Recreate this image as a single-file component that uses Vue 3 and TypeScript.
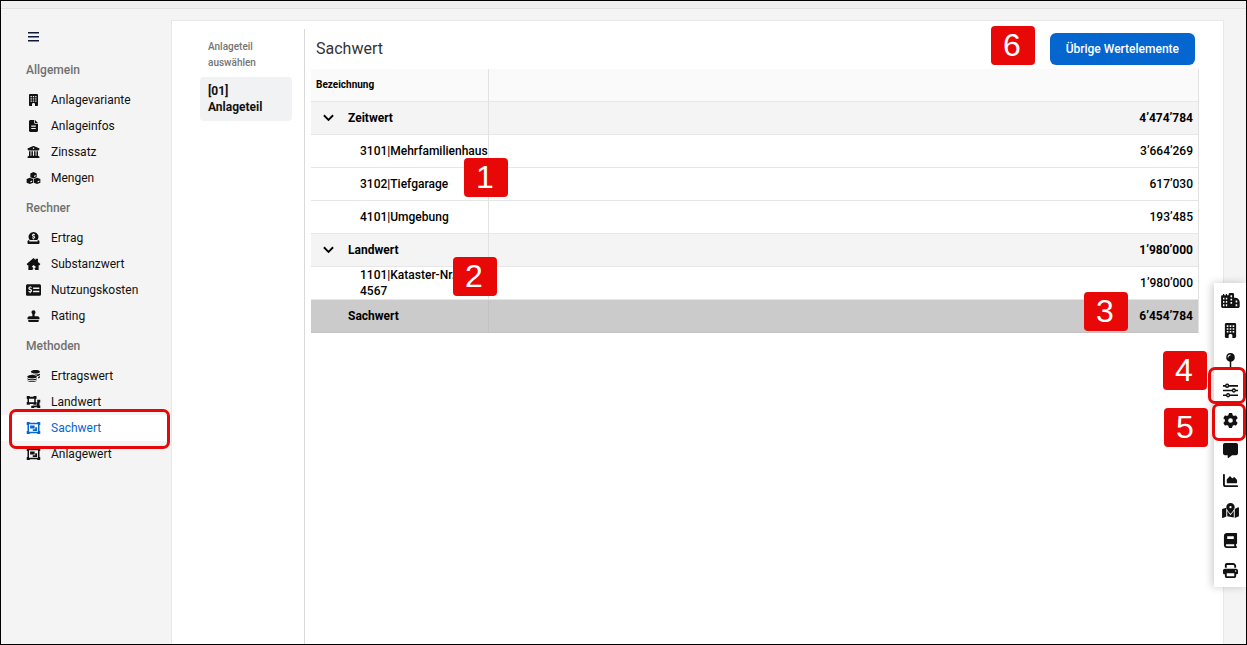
<script setup lang="ts">
interface Icon {
  box: string
  d: string
}

interface NavItem {
  label: string
  icon: string
  active?: boolean
}

interface NavGroup {
  title: string
  items: NavItem[]
}

interface Row {
  kind: 'group' | 'item' | 'total'
  label: string
  value: string
}

const icons: Record<string, Icon> = {
  building: {
    box: '0 0 384 512',
    d: 'M48 0C21 0 0 21 0 48V464c0 27 21 48 48 48h80V432c0-70 128-70 128 0v80h80c27 0 48-21 48-48V48c0-27-21-48-48-48zM64 80h56v56H64zM164 80h56v56h-56zM264 80h56v56h-56zM64 176h56v56H64zM164 176h56v56h-56zM264 176h56v56h-56zM64 272h56v56H64zM164 272h56v56h-56zM264 272h56v56h-56z',
  },
  file: {
    box: '0 0 384 512',
    d: 'M64 0C28.700 0 0 28.700 0 64V448c0 35.300 28.700 64 64 64H320c35.300 0 64-28.700 64-64V160H256c-17.700 0-32-14.300-32-32V0zM256 0V128H384zM96 236H288v48H96zM96 340H288v48H96z',
  },
  landmark: {
    box: '0 0 512 512',
    d: 'M243.400 2.600l-224 96c-14 6-21.800 21-18.700 35.800S16.800 160 32 160v8c0 13.300 10.700 24 24 24H456c13.300 0 24-10.700 24-24v-8c15.200 0 28.300-10.700 31.300-25.600s-4.800-29.900-18.700-35.800l-224-96c-8-3.400-17.200-3.400-25.200 0zM128 224H64V420l-50 33c-12 8-17 22-13 36S18 512 32 512H480c14 0 26-9 31-23s-1-28-13-36l-50-33V224H384V416H344V224H280V416H232V224H168V416H128zM256 64a32 32 0 1 1 0 64 32 32 0 1 1 0-64z',
  },
  cubes: {
    box: '0 0 16 14',
    d: 'M8 0l3.700 1.700v4.300L8 7.500 4.300 6V1.700zM8.600 4.300v1.500l2-.8V3.400zM3.800 6.600L7.600 8.200v4.200L3.800 14 0 12.400V8.200zM4.400 10.800v1.500l2-.8V10zM12.200 6.600L16 8.200v4.200L12.200 14l-3.800-1.600V8.200zM12.800 10.800v1.500l2-.8V10z',
  },
  income: {
    box: '0 0 16 16',
    d: 'M8 0a6.500 6.500 0 0 1 5 10.700H3A6.500 6.500 0 0 1 8 0zM10 3.400C9.300 2.900 8.700 2.700 8.500 2.700V2h-1v.7C5.500 3 5.200 5.600 7.400 6.300c2 .6 1.300 1.400.4 1.300-.7 0-1.200-.3-1.800-.6v1.300c.5.300 1 .4 1.500.5V10h1V8.800c2-.3 2.400-2.800.2-3.600C6.500 4.500 7.600 3.600 8.600 4c.5.100.9.300 1.400.5zM1.500 11h1v1.500h11V11h1c.9 0 1.500.8 1.500 1.700V14.500c0 .9-.6 1.500-1.500 1.500h-13C.6 16 0 15.400 0 14.500v-1.800C0 11.800.6 11 1.500 11z',
  },
  house: {
    box: '0 0 16 14',
    d: 'M8 0l2.500 2.200V.8h2.700v3.800L16 7 15 8.400h-1V14h-3.700L9 12.200l2-1.800-3-2.300-2 2 2 1.500L6.700 14H2V8.400H1L0 7z',
  },
  moneyCheck: {
    box: '0 0 18 14',
    d: 'M2 0h14c1.200 0 2 .8 2 2v10c0 1.200-.8 2-2 2H2c-1.200 0-2-.8-2-2V2C0 .8.800 0 2 0zM6.800 4.500V3.300C6.300 3.100 5.900 3 5.500 3V2.200h-1V3C2.400 3.400 2.200 6.300 4.600 7c2 .6 1.500 1.600.3 1.500-.7 0-1.300-.3-1.900-.6v1.600c.5.200 1 .4 1.500.5v1h1V10c2.100-.4 2.500-3.400.2-4.200-2.500-.9-1.200-2-.1-1.700.4.100.8.200 1.200.4zM8.500 4v1.700H16V4zM8.500 8v1.700H16V8z',
  },
  stamp: {
    box: '0 0 512 512',
    d: 'M304 200c0-17 8-32 18-46 13-16 20-36 20-58 0-48-38-86-86-86s-86 38-86 86c0 22 7 42 20 58 10 14 18 29 18 46v70H80c-44 0-80 36-80 80v40h512v-40c0-44-36-80-80-80H304zM32 424V464c0 26 22 48 48 48H432c26 0 48-22 48-48V424z',
  },
  coins: {
    box: '0 0 16 14',
    d: 'M10.500 0C13.500 0 15.500.8 15.500 2s-2 2.200-5 2.200S5 3.300 5 2 7.500 0 10.500 0zM15.600 4v1.300c0 .9-1 1.500-2.600 1.900C11.500 5.800 9 5.200 6.500 5.200 5.500 4.800 5 4.300 5 4c2 1.800 8.500 1.800 10.600 0zM15.600 7v1.200c0 .9-1 1.400-2.200 1.800V8.200c.9-.3 1.700-.7 2.200-1.200zM6.300 5.900c3 0 5.700.8 5.700 2s-2.700 2-5.700 2-5.600-.8-5.600-2 2.600-2 5.600-2zM.7 9.500c2.100 1.600 9.200 1.600 11.300 0v.9c-.3 2.100-11 2.100-11.300 0zM.7 11.900c2.100 1.500 9.200 1.500 11.300 0-.2 2.800-11.100 2.800-11.300 0z',
  },
  ungroup: {
    box: '0 0 18 16',
    d: 'M0 0h4v1h5V0h4v4h-1v4h1v3.500H9v-1H4v1H0V8h1V4H0zM3 3.500v4.800h7V3.500zM14 5h4v3.500h-1v4h1V16h-4v-1h-4v1H6v-3h2v-.500h5.500v-4H14z',
  },
  group: {
    box: '0 0 18 16',
    d: 'M0 0h4v1h10V0h4v4h-1v8h1v4h-4v-1H4v1H0v-4h1V4H0zM3 3v10h12V3zM4.500 4.500h6v4h-6zM11.300 7h2.500v5H8V9.500h3.300z',
  },
  city: {
    box: '0 0 20 16',
    d: 'M1 2.500h1V1h1.300v1.500h1.700V1h1.300v1.500H8V1.500C8 .6 8.600 0 9.500 0h2.800c.9 0 1.500.6 1.500 1.500V5h1c3 0 5 2 5 4.800V14c0 1.200-.8 2-2 2H2c-1.200 0-2-.8-2-2V3.500c0-.6.400-1 1-1zM2 5v2h1.500V5zM5 5v2h1.500V5zM10 2.500v2h1.700v-2zM10 6v2h1.700V6zM2 8.500v2h1.500v-2zM5 8.500v2h1.500v-2zM10 9.500v2h1.700v-2zM15.500 8v2h1.700V8zM2 12v2h1.500v-2zM5 12v2h1.500v-2zM15.500 12v2h1.700v-2z',
  },
  pin: {
    box: '0 0 16 16',
    d: 'M8 0a4.700 4.700 0 0 1 .8 9.300V16H7.200V9.300A4.700 4.700 0 0 1 8 0zM8 1.700C6 1.700 4.900 3 4.900 4.700h1C5.900 3.500 6.600 2.700 8 2.700z',
  },
  sliders: {
    box: '0 0 16 14',
    d: 'M0 1.200h2.300a2.200 2.200 0 0 1 4.200 0H16v1.700H6.500a2.200 2.200 0 0 1-4.200 0H0zM4.400 1.200a.8.800 0 1 0 0 1.600.8.800 0 0 0 0-1.600zM0 6.200h9.500a2.200 2.200 0 0 1 4.200 0H16v1.700h-2.300a2.200 2.200 0 0 1-4.200 0H0zM11.600 6.200a.8.800 0 1 0 0 1.600.8.800 0 0 0 0-1.600zM0 11.200h3.300a2.200 2.200 0 0 1 4.200 0H16v1.700H7.500a2.200 2.200 0 0 1-4.200 0H0zM5.400 11.200a.8.800 0 1 0 0 1.600.8.800 0 0 0 0-1.600z',
  },
  gear: {
    box: '0 0 512 512',
    d: 'M495.900 166.600c3.200 8.700 .5 18.400-6.400 24.600l-43.300 39.400c1.100 8.300 1.700 16.800 1.700 25.400s-.6 17.100-1.700 25.400l43.300 39.400c6.900 6.200 9.600 15.900 6.400 24.600c-4.400 11.900-9.700 23.300-15.800 34.300l-4.700 8.100c-6.600 11-14 21.400-22.100 31.200c-5.900 7.200-15.700 9.600-24.500 6.800l-55.700-17.700c-13.400 10.300-28.200 18.900-44 25.400l-12.500 57.100c-2 9.100-9 16.300-18.200 17.800c-13.800 2.300-28 3.500-42.500 3.500s-28.700-1.200-42.500-3.500c-9.200-1.500-16.200-8.700-18.200-17.800l-12.500-57.100c-15.800-6.500-30.600-15.100-44-25.400L83.100 425.900c-8.800 2.800-18.600 .3-24.500-6.800c-8.100-9.800-15.500-20.200-22.100-31.200l-4.700-8.100c-6.100-11-11.400-22.400-15.800-34.300c-3.200-8.700-.5-18.400 6.400-24.600l43.300-39.400C64.600 273.100 64 264.600 64 256s.6-17.100 1.700-25.400L22.400 191.200c-6.900-6.200-9.600-15.900-6.400-24.600c4.400-11.900 9.700-23.300 15.800-34.300l4.700-8.100c6.600-11 14-21.400 22.100-31.200c5.900-7.200 15.700-9.600 24.500-6.800l55.700 17.700c13.400-10.300 28.200-18.900 44-25.400l12.500-57.100c2-9.100 9-16.300 18.200-17.800C227.300 1.200 241.500 0 256 0s28.700 1.200 42.500 3.500c9.200 1.500 16.200 8.700 18.200 17.800l12.500 57.100c15.800 6.500 30.600 15.100 44 25.400l55.700-17.700c8.800-2.800 18.600-.3 24.500 6.800c8.100 9.800 15.500 20.200 22.100 31.200l4.700 8.100c6.100 11 11.400 22.400 15.800 34.300zM256 336a80 80 0 1 0 0-160 80 80 0 1 0 0 160z',
  },
  comment: {
    box: '0 0 512 512',
    d: 'M64 0C28.700 0 0 28.700 0 64V352c0 35.300 28.700 64 64 64h96v80c0 6.100 3.400 11.600 8.800 14.300s11.900 2.100 16.800-1.500L309.300 416H448c35.300 0 64-28.700 64-64V64c0-35.300-28.700-64-64-64H64z',
  },
  chart: {
    box: '0 0 512 512',
    d: 'M64 64c0-17.700-14.300-32-32-32S0 46.300 0 64V400c0 44.200 35.800 80 80 80H480c17.700 0 32-14.300 32-32s-14.300-32-32-32H80c-8.800 0-16-7.200-16-16V64zm96 288H448c17.700 0 32-14.300 32-32V251.800c0-7.600-2.700-15-7.700-20.800l-65.800-76.800c-12.100-14.200-33.700-15-46.900-1.800l-21 21c-10 10-26.400 9.200-35.400-1.600l-39.200-47c-12.600-15.100-35.700-15.400-48.700-.6L135.900 215c-5.100 5.800-7.900 13.300-7.900 21.100v84c0 17.700 14.300 32 32 32z',
  },
  map: {
    box: '0 0 18 16',
    d: 'M9 0c2.600 0 4.500 1.900 4.500 4.400C13.500 6.600 10.500 10 9 11.500 7.500 10 4.500 6.600 4.500 4.400 4.500 1.900 6.400 0 9 0zM9 3.200a1.200 1.200 0 1 0 0 2.400 1.200 1.200 0 0 0 0-2.400zM0 6.500L4.500 5v9.300L.8 16c-.4.100-.8-.1-.8-.5zM5.500 8.500L9 13l3.500-4.500v7l-7-1.500zM13.500 6.300L17.200 4.500c.4-.1.800.1.800.5v9l-4.500 2z',
  },
  book: {
    box: '0 0 448 512',
    d: 'M96 0C43 0 0 43 0 96V416c0 53 43 96 96 96H416c17.700 0 32-14.300 32-32s-14.300-32-32-32V384c17.700 0 32-14.300 32-32V32c0-17.700-14.300-32-32-32H96zm0 384H352v64H96c-42 0-42-64 0-64zM112 112H336v96H112z',
  },
  print: {
    box: '0 0 512 512',
    d: 'M128 0C92.700 0 64 28.700 64 64v96h64V64H354.700L384 93.300V160h64V93.300c0-17-6.700-33.300-18.700-45.300L400 18.700C388 6.700 371.700 0 354.700 0H128zM384 352v96H128V352H384zm64 32h32c17.700 0 32-14.300 32-32V256c0-35.300-28.700-64-64-64H64c-35.300 0-64 28.700-64 64v96c0 17.700 14.300 32 32 32H64v64c0 35.300 28.700 64 64 64H384c35.300 0 64-28.700 64-64V384zM432 248a24 24 0 1 1 0 48 24 24 0 1 1 0-48z',
  },
}

const groups: NavGroup[] = [
  {
    title: 'Allgemein',
    items: [
      { label: 'Anlagevariante', icon: 'building' },
      { label: 'Anlageinfos', icon: 'file' },
      { label: 'Zinssatz', icon: 'landmark' },
      { label: 'Mengen', icon: 'cubes' },
    ],
  },
  {
    title: 'Rechner',
    items: [
      { label: 'Ertrag', icon: 'income' },
      { label: 'Substanzwert', icon: 'house' },
      { label: 'Nutzungskosten', icon: 'moneyCheck' },
      { label: 'Rating', icon: 'stamp' },
    ],
  },
  {
    title: 'Methoden',
    items: [
      { label: 'Ertragswert', icon: 'coins' },
      { label: 'Landwert', icon: 'ungroup' },
      { label: 'Sachwert', icon: 'group', active: true },
      { label: 'Anlagewert', icon: 'group' },
    ],
  },
]

const rows: Row[] = [
  { kind: 'group', label: 'Zeitwert', value: '4’474’784' },
  { kind: 'item', label: '3101|Mehrfamilienhaus', value: '3’664’269' },
  { kind: 'item', label: '3102|Tiefgarage', value: '617’030' },
  { kind: 'item', label: '4101|Umgebung', value: '193’485' },
  { kind: 'group', label: 'Landwert', value: '1’980’000' },
  { kind: 'item', label: '1101|Kataster-Nr.\n4567', value: '1’980’000' },
  { kind: 'total', label: 'Sachwert', value: '6’454’784' },
]

const tools = ['city', 'building', 'pin', 'sliders', 'gear', 'comment', 'chart', 'map', 'book', 'print']
</script>

<template>
  <div class="window">
    <div class="topbar"></div>
    <div class="body">
      <nav class="sidebar">
        <button class="burger" type="button" aria-label="Menü">
          <svg viewBox="0 0 11 10"><path d="M0 0h11v1.500H0zM0 4h11v1.500H0zM0 8h11v1.500H0z" /></svg>
        </button>
        <section v-for="group in groups" :key="group.title">
          <h2>{{ group.title }}</h2>
          <a v-for="item in group.items" :key="item.label" href="#" class="nav-item" :class="{ active: item.active }">
            <svg :viewBox="icons[item.icon].box"><path fill-rule="evenodd" :d="icons[item.icon].d" /></svg>
            <span>{{ item.label }}</span>
          </a>
        </section>
      </nav>

      <main class="panel">
        <aside class="parts">
          <p>Anlageteil auswählen</p>
          <button type="button" class="part">[01] Anlageteil</button>
        </aside>
        <div class="content">
          <header class="head">
            <h1>Sachwert</h1>
            <button type="button" class="primary">Übrige Wertelemente</button>
          </header>
          <table>
            <thead>
              <tr>
                <th class="name">Bezeichnung</th>
                <th></th>
              </tr>
            </thead>
            <tbody>
              <tr v-for="row in rows" :key="row.kind + row.label" :class="row.kind">
                <td class="name">
                  <div class="cell">
                    <button v-if="row.kind === 'group'" type="button" class="toggle" aria-label="Zuklappen">
                      <svg viewBox="0 0 12 8"><path d="M1 1l5 5 5-5" /></svg>
                    </button>
                    <span>{{ row.label }}</span>
                  </div>
                </td>
                <td class="value">{{ row.value }}</td>
              </tr>
            </tbody>
          </table>
        </div>
      </main>
    </div>

    <div class="tools" role="toolbar">
      <button v-for="tool in tools" :key="tool" type="button" :aria-label="tool">
        <svg :class="tool" :viewBox="icons[tool].box"><path fill-rule="evenodd" :d="icons[tool].d" /></svg>
      </button>
    </div>

    <div class="frame frame-nav"></div>
    <div class="frame frame-sliders"></div>
    <div class="frame frame-gear"></div>
    <span class="mark mark-1">1</span>
    <span class="mark mark-2">2</span>
    <span class="mark mark-3">3</span>
    <span class="mark mark-4">4</span>
    <span class="mark mark-5">5</span>
    <span class="mark mark-6">6</span>
  </div>
</template>

<style>
body {
  margin: 0;
}
</style>

<style scoped>
* {
  box-sizing: border-box;
}

button {
  margin: 0;
  padding: 0;
  border: 0;
  background: none;
  font: inherit;
  color: inherit;
  cursor: pointer;
}

svg {
  display: block;
  fill: currentColor;
}

.window {
  position: relative;
  display: flex;
  flex-direction: column;
  min-height: 100vh;
  border: 1px solid #000;
  background: #f4f4f4;
  color: #111;
  font-family: Roboto, "Liberation Sans", sans-serif;
  font-size: 12px;
  line-height: 16px;
}

.topbar {
  height: 8px;
  background: #f1f0f0;
  border-bottom: 1px solid #e2e2e2;
}

.body {
  flex: 1;
  display: flex;
  padding: 11px 22px 0 0;
}

.sidebar {
  flex: none;
  width: 170px;
}

.burger {
  display: flex;
  align-items: center;
  height: 33px;
  padding-left: 27px;
  color: #0e1a33;
}

.burger svg {
  width: 11px;
  height: 10px;
}

h2 {
  margin: 0;
  padding: 9px 0 9px 25px;
  font-size: 12px;
  line-height: 16px;
  font-weight: 500;
  color: #707070;
}

.nav-item {
  display: flex;
  align-items: center;
  gap: 10px;
  height: 26px;
  padding-left: 25px;
  color: #111;
  text-decoration: none;
}

.nav-item svg {
  width: 15px;
  height: 12px;
}

.nav-item.active {
  background: #fff;
  color: #0566cf;
}

.panel {
  flex: 1;
  display: flex;
  min-width: 0;
  padding: 8px 24px 0 28px;
  border: 1px solid #e8e8e8;
  border-bottom: 0;
  background: #fff;
}

.parts {
  flex: none;
  width: 92px;
  margin-right: 12px;
}

.parts p {
  margin: 0;
  padding: 10px 8px 6px;
  font-size: 10px;
  font-weight: 500;
  color: #757575;
}

.part {
  display: block;
  width: 100%;
  padding: 6px 8px;
  border-radius: 4px;
  background: #f1f2f4;
  font-weight: 700;
  text-align: left;
  white-space: normal;
}

.content {
  flex: 1;
  min-width: 0;
  padding-left: 6px;
  border-left: 1px solid #d9d9d9;
}

.head {
  display: flex;
  align-items: center;
  justify-content: space-between;
  height: 40px;
  padding: 0 4px 0 5px;
}

h1 {
  margin: 0;
  font-size: 16px;
  line-height: 20px;
  font-weight: 400;
  color: #333;
}

.primary {
  height: 32px;
  padding: 0 16px;
  border-radius: 6px;
  background: #0566cf;
  color: #fff;
  font-weight: 500;
}

table {
  width: 100%;
  table-layout: fixed;
  border-spacing: 0;
  border-right: 1px solid #e2e2e2;
  color: #000;
}

th,
td {
  height: 33px;
  padding: 0;
  border-bottom: 1px solid #e6e6e6;
}

th {
  background: #fafafa;
  font-size: 10px;
  font-weight: 700;
  text-align: left;
}

th.name {
  padding-left: 5px;
}

.name {
  width: 178px;
  border-right: 1px solid #e2e2e2;
}

.cell {
  display: flex;
  align-items: center;
  height: 32px;
  padding-left: 37px;
  font-weight: 500;
  white-space: pre;
}

.item .cell {
  padding-left: 49px;
}

.group .cell {
  padding-left: 12px;
  gap: 14px;
}

.toggle svg {
  width: 11px;
  height: 8px;
  fill: none;
  stroke: #000;
  stroke-width: 2;
}

.value {
  padding-right: 5px;
  font-weight: 500;
  text-align: right;
}

.group td {
  background: #f4f4f4;
}

.group td,
.group .cell,
.total td,
.total .cell {
  font-weight: 700;
}

.total td {
  background: #cbcbcb;
  border-color: #c2c2c2;
}

.tools {
  position: absolute;
  top: 282px;
  right: 0;
  display: flex;
  flex-direction: column;
  width: 32px;
  padding: 2px 0 2px 1px;
  background: #fff;
  box-shadow: -2px 0 8px rgba(0, 0, 0, 0.2);
}

.tools button {
  display: flex;
  align-items: center;
  justify-content: center;
  height: 30px;
}

.tools svg {
  width: 15px;
  height: 15px;
}

.tools .city {
  width: 19px;
}

.tools .map {
  width: 17px;
}

.frame {
  position: absolute;
  border: 3px solid #e60808;
  border-radius: 7px;
  pointer-events: none;
}

.frame-nav {
  top: 408px;
  left: 8px;
  width: 161px;
  height: 40px;
}

.frame-sliders {
  top: 366px;
  right: 0;
  width: 38px;
  height: 37px;
}

.frame-gear {
  top: 402px;
  right: 0;
  width: 34px;
  height: 38px;
}

.mark {
  position: absolute;
  width: 44px;
  height: 39px;
  padding-right: 2px;
  border-radius: 4px;
  background: #e90808;
  color: #fff;
  font-family: "Liberation Sans", Arial, sans-serif;
  font-size: 32px;
  line-height: 39px;
  text-align: center;
}

.mark-1 {
  top: 157px;
  left: 463px;
}

.mark-2 {
  top: 256px;
  left: 452px;
}

.mark-3 {
  top: 291px;
  right: 118px;
}

.mark-4 {
  top: 350px;
  right: 39px;
}

.mark-5 {
  top: 407px;
  right: 38px;
}

.mark-6 {
  top: 25px;
  right: 211px;
}
</style>
